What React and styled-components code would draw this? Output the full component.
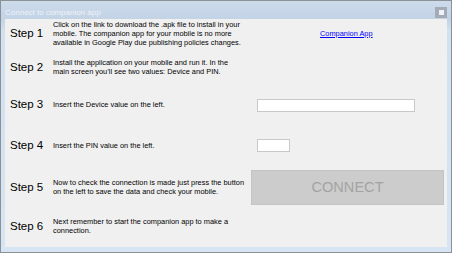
import React from 'react'
import styled, { createGlobalStyle } from 'styled-components'

const Global = createGlobalStyle`
  html, body {
    margin: 0;
    padding: 0;
    background: #ffffff;
  }
`

const Window = styled.div`
  width: 452px;
  height: 253px;
  box-sizing: border-box;
  border: 1px solid #8c9196;
  background: linear-gradient(to bottom, #cddbeb 0px, #c2d3e6 18px, #d2e1f1 30px, #d6e4f3 100%);
  display: flex;
  flex-direction: column;
  font-family: "Liberation Sans", Arial, sans-serif;
`

const TitleBar = styled.div`
  height: 18px;
  display: flex;
  align-items: center;
  padding: 0 4px 0 4px;
`

const Title = styled.span`
  font-size: 8px;
  color: #eef2f7;
  flex: 1;
  padding-top: 4px;
`

const CloseBox = styled.div`
  width: 12px;
  height: 11px;
  margin-top: 5px;
  background: #a2abb6;
  display: flex;
  align-items: center;
  justify-content: center;

  span {
    width: 5px;
    height: 5px;
    background: #f0f2f5;
  }
`

const Client = styled.div`
  flex: 1;
  margin: 0 4px 5px 4px;
  background: #f0f0f0;
  display: grid;
  grid-template-columns: 43px 198px 1fr;
  grid-template-rows: 28px 40px 34px 48px 36px 42px;
  padding-left: 5px;
  padding-right: 3px;
`

const Label = styled.div`
  font-size: 11.5px;
  color: #000;
  display: flex;
  align-items: center;
`

const Desc = styled.div`
  font-size: 7.4px;
  line-height: 9px;
  color: #000;
  display: flex;
  align-items: center;
  padding-right: 6px;
`

const Cell = styled.div`
  display: flex;
  align-items: center;
`

const AppLink = styled.a`
  font-size: 7.4px;
  color: #0000ff;
  text-decoration: underline;
  margin-left: 69px;
  cursor: pointer;
`

const Field = styled.input`
  box-sizing: border-box;
  width: ${p => p.w}px;
  height: 13px;
  margin: ${p => p.dy}px 0 0 6px;
  padding: 0;
  border: 1px solid #c8c8c8;
  background: #fff;
  outline: none;
`

const ConnectButton = styled.button`
  width: 100%;
  height: 35px;
  border: 1px solid #c4c4c4;
  background: #cccccc;
  color: #a3a3a3;
  font-family: "Liberation Sans", Arial, sans-serif;
  font-size: 14.6px;
  padding: 0;
  cursor: default;
`

const steps = [
  {
    n: 1,
    text: 'Click on the link to download the .apk file to install in your mobile. The companion app for your mobile is no more available in Google Play due publishing policies changes.',
  },
  {
    n: 2,
    text: 'Install the application on your mobile and run it. In the main screen you\u2019ll see two values: Device and PIN.',
  },
  { n: 3, text: 'Insert the Device value on the left.' },
  { n: 4, text: 'Insert the PIN value on the left.' },
  {
    n: 5,
    text: 'Now to check the connection is made just press the button on the left to save the data and check your mobile.',
  },
  { n: 6, text: 'Next remember to start the companion app to make a connection.' },
]

const control = n => {
  if (n === 1) return <AppLink>Companion App</AppLink>
  if (n === 3) return <Field w={158} dy={3} />
  if (n === 4) return <Field w={33} dy={0} />
  if (n === 5) return <ConnectButton disabled>CONNECT</ConnectButton>
  return null
}

const App = () => (
  <React.Fragment>
    <Global />
    <Window>
      <TitleBar>
        <Title>Connect to companion app</Title>
        <CloseBox><span /></CloseBox>
      </TitleBar>
      <Client>
        {steps.map(s => (
          <React.Fragment key={s.n}>
            <Label>Step {s.n}</Label>
            <Desc>{s.text}</Desc>
            <Cell>{control(s.n)}</Cell>
          </React.Fragment>
        ))}
      </Client>
    </Window>
  </React.Fragment>
)

export default App
